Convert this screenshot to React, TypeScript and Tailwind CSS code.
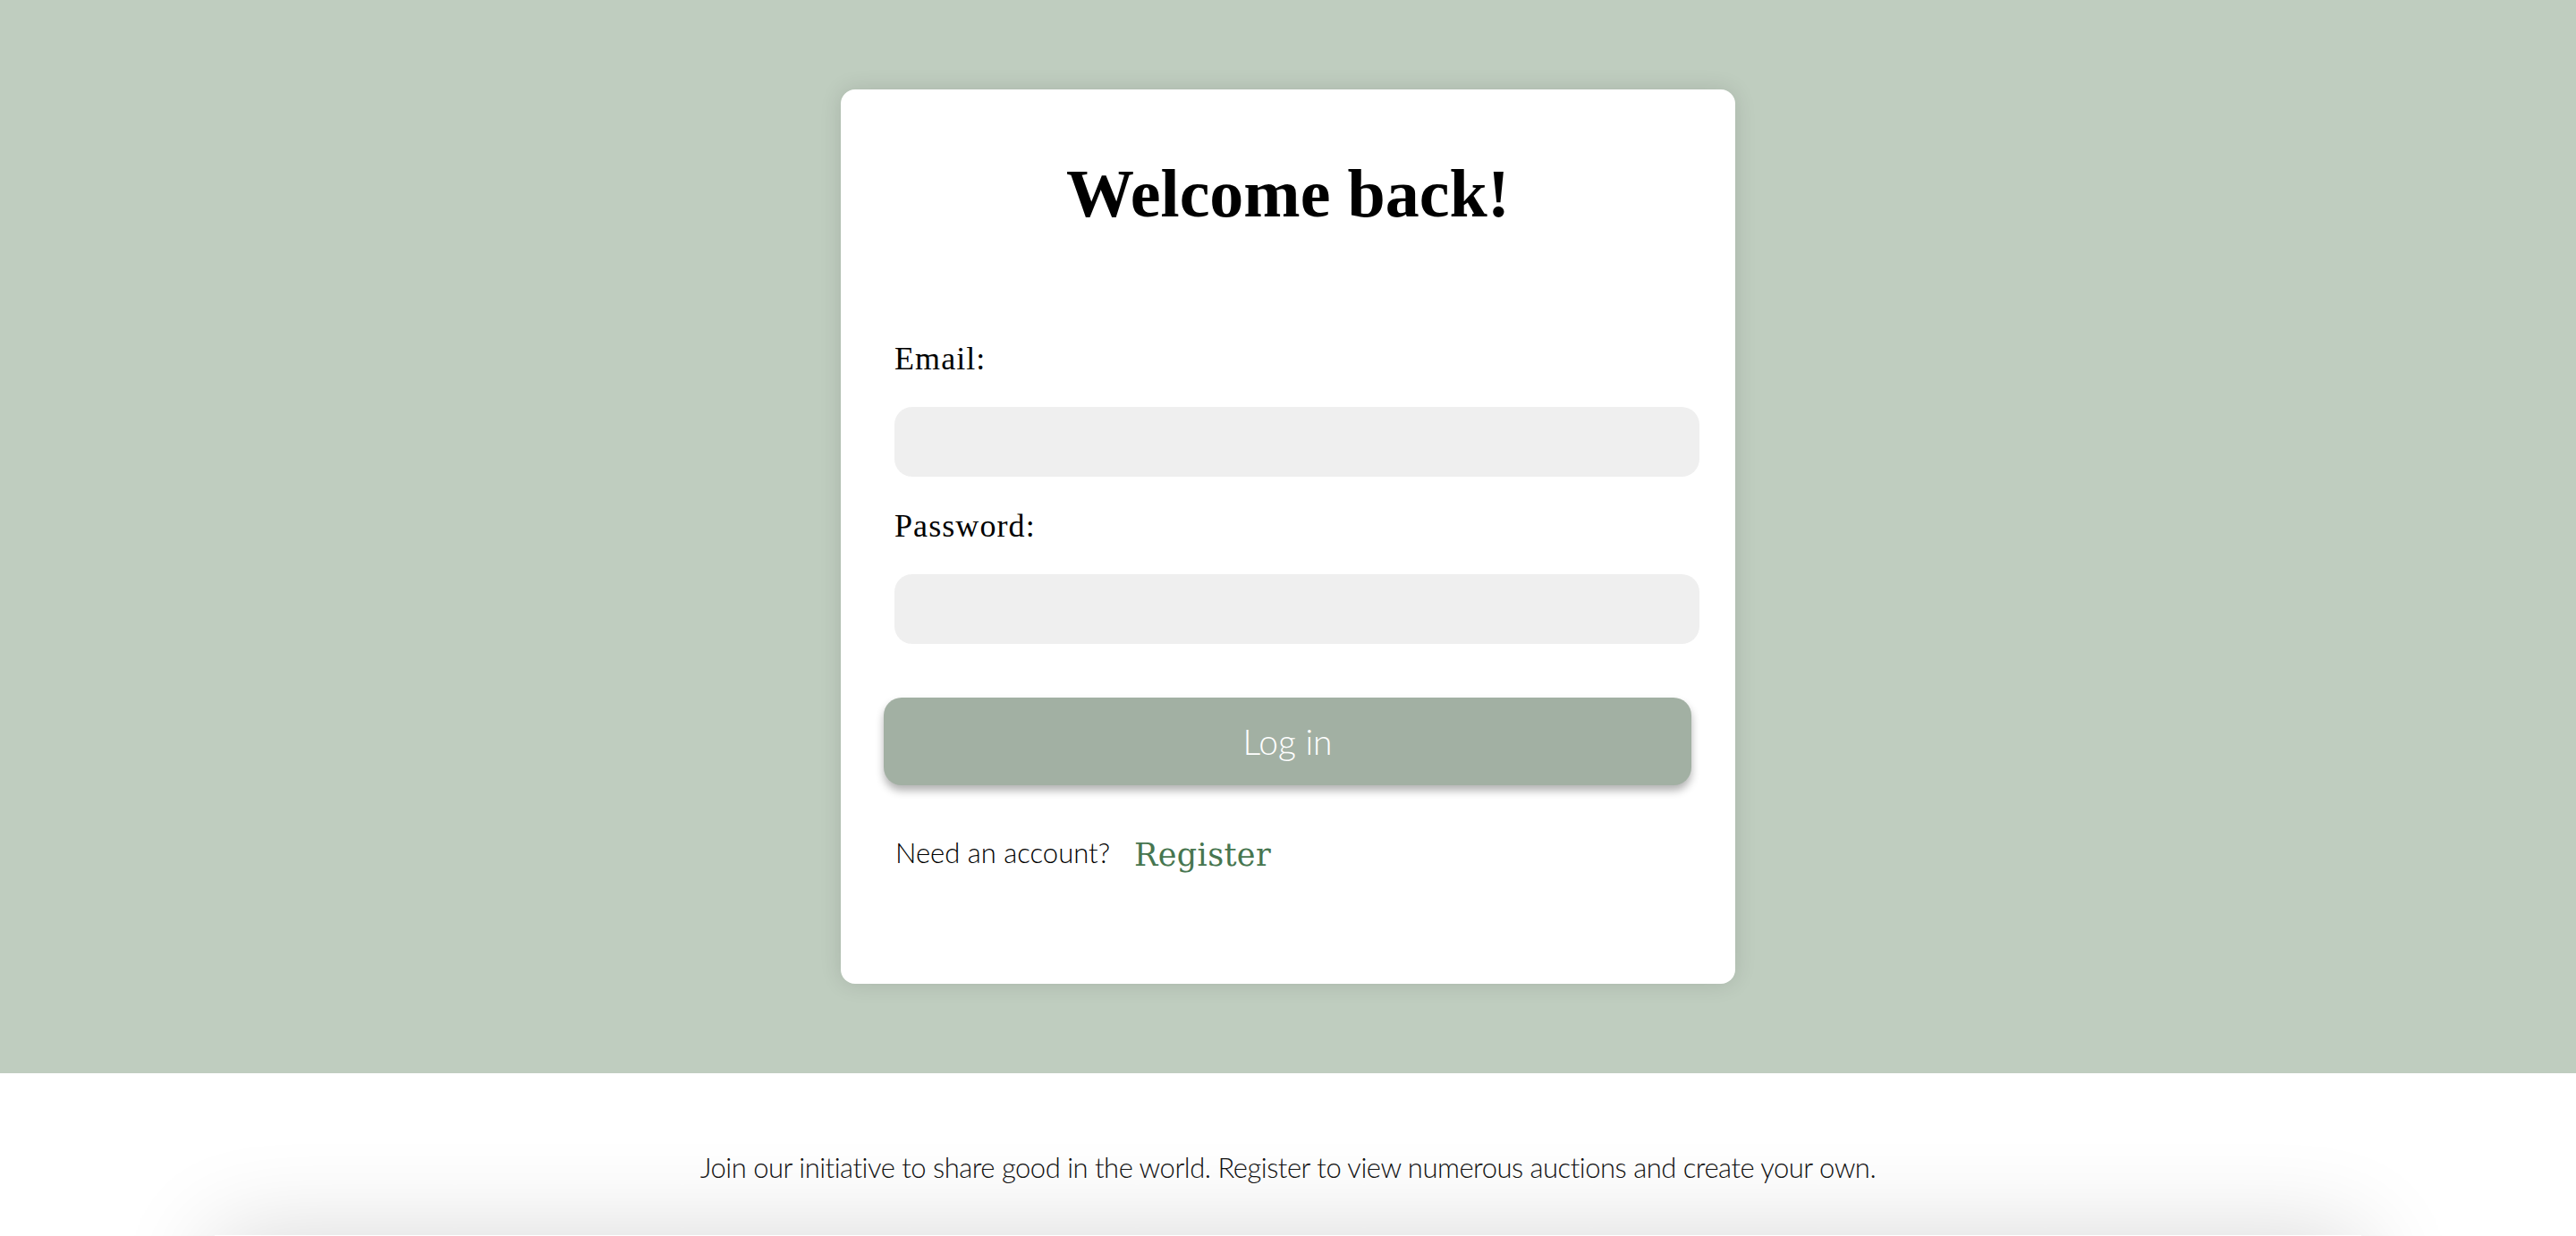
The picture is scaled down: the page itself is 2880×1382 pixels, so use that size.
import React from 'react';

/* =======================
   LOGIN PAGE
======================= */
const serif = "font-['Liberation_Serif','Times_New_Roman',serif]";
const light = "font-['Lato','Open_Sans',sans-serif] font-light";

const Field: React.FC<{ label: string; type: string; top: string }> = ({ label, type, top }) => {
  return (
    <div className={`flex flex-col ${top}`}>
      <label className={`${serif} ml-[60px] text-[36px] leading-[36px] tracking-[0.03em] text-black`}>{label}</label>
      <input
        type={type}
        className="mt-[36px] ml-[60px] w-[900px] h-[78px] rounded-[20px] bg-[#efefef] outline-none px-6 text-[30px]"
      />
    </div>
  );
};

export default function App() {
  return (
    <div className="w-full min-h-screen bg-white overflow-hidden">
      {/* HERO */}
      <section className="w-full h-[1200px] bg-[#bfcdbf] flex justify-center pt-[100px]">
        <div className="w-[1000px] h-[1000px] bg-white rounded-[16px] shadow-[0_0_24px_rgba(0,0,0,0.12)] flex flex-col">
          <h1 className={`${serif} mt-[78px] text-center text-[76px] leading-[76px] font-bold text-black`}>
            Welcome back!
          </h1>

          <Field label="Email:" type="email" top="mt-[129px]" />
          <Field label="Password:" type="password" top="mt-[37px]" />

          <button
            className={`${light} mt-[60px] ml-[48px] w-[903px] h-[98px] rounded-[20px] bg-[#a2b0a3] text-white text-[39px] shadow-[0_6px_10px_rgba(0,0,0,0.3)]`}
          >
            Log in
          </button>

          <div className="mt-[58px] ml-[61px] flex items-baseline gap-[27px]">
            <span className={`${light} text-[31px] leading-[32px] text-black`}>Need an account?</span>
            <a className="font-['DejaVu_Serif',serif] text-[35px] leading-[35px] tracking-[0.01em] text-[#477650] translate-y-[3px]">
              Register
            </a>
          </div>
        </div>
      </section>

      {/* FOOTER */}
      <footer className="w-full bg-white pt-[89px] pb-[60px] flex justify-center">
        <p className={`${light} text-[31px] leading-[32px] tracking-[-0.5px] text-[#111]`}>
          Join our initiative to share good in the world. Register to view numerous auctions and create your own.
        </p>
      </footer>

      <div className="mx-[240px] h-[300px] bg-white shadow-[0_0_110px_rgba(0,0,0,0.16)]" />
    </div>
  );
}
